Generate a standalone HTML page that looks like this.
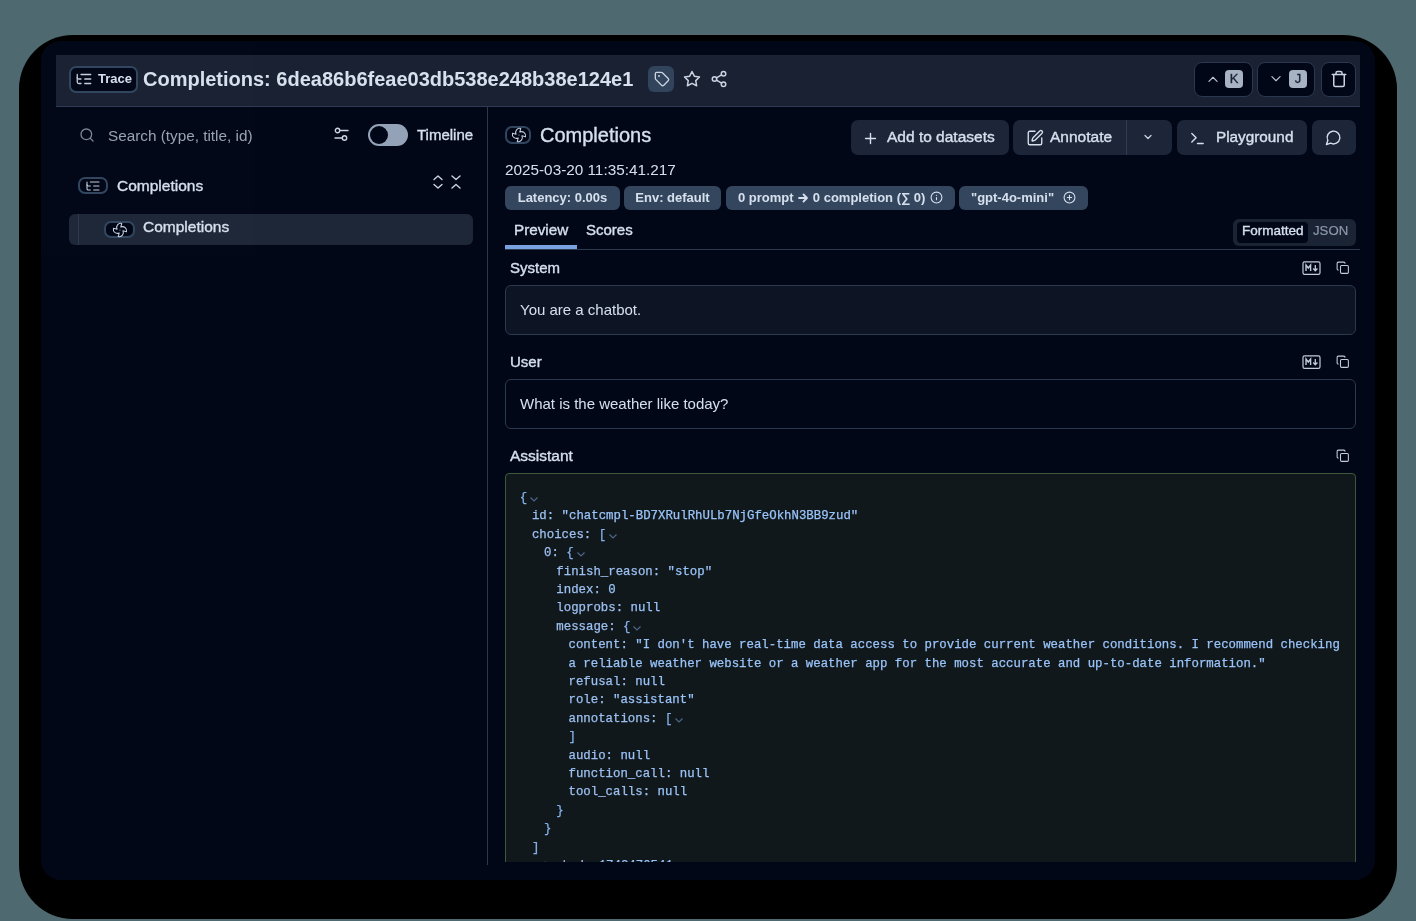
<!DOCTYPE html>
<html><head><meta charset="utf-8">
<style>
*{box-sizing:border-box;margin:0;padding:0}
html,body{width:1416px;height:921px;overflow:hidden;background:#4f6971;font-family:"Liberation Sans",sans-serif;color:#dde5f0}
.abs{position:absolute}
#frame{position:absolute;left:19px;top:35px;width:1378px;height:884px;background:#000;border-radius:54px}
#win{position:absolute;left:41px;top:41px;width:1334px;height:839px;background:#020817;border-radius:20px;overflow:hidden}
#hdr{position:absolute;left:56px;top:55px;width:1304px;height:52px;background:#1a2233;border-bottom:1px solid #2d3b54}
.btn{position:absolute;border:1px solid #2b3a52;border-radius:8px;background:#020817}
.kbd{position:absolute;width:18px;height:18px;border-radius:4px;background:#a8b3c3;color:#1a2436;font-size:13px;-webkit-text-stroke:0.3px currentColor;text-align:center;line-height:18px}
svg{position:absolute;overflow:visible}
.t{position:absolute;white-space:nowrap}
.med{-webkit-text-stroke:0.35px currentColor}
.cl{position:absolute;white-space:nowrap;font-family:"Liberation Mono",monospace;font-size:12.36px;line-height:18.4px;height:18.4px}
.k{color:#9dc1f2}.s{color:#9ac4fa}.p{color:#86b2ee}
.cl{-webkit-text-stroke:0.25px currentColor}
.chev{position:relative;left:3px;top:1px;display:inline-block}
.badge{border-radius:6px;background:#35475f;color:#d7e1ee;font-size:13px;font-weight:bold;text-align:center;line-height:24px;white-space:nowrap}
</style></head><body><div id="root" style="position:absolute;left:0;top:0;width:1416px;height:921px;will-change:transform;opacity:0.999">
<div id="frame"></div>
<div id="win"></div>
<div id="hdr"></div>
<!-- header content -->
<div class="abs" style="left:69px;top:66px;width:69px;height:27px;border:2px solid #33465f;border-radius:7px;background:#020817"></div>
<svg style="left:75px;top:70px" width="18" height="18" viewBox="0 0 24 24" fill="none" stroke="#c6d0de" stroke-width="1.7" stroke-linecap="round" stroke-linejoin="round"><path d="M21 12h-8"/><path d="M21 6H8"/><path d="M21 18h-8"/><path d="M3 6v4c0 1.1.9 2 2 2h3"/><path d="M3 10v6c0 1.1.9 2 2 2h3"/></svg>
<div class="t" style="left:98px;top:71px;font-size:13px;font-weight:bold;color:#d7e1ee">Trace</div>
<div class="t" style="left:143px;top:68px;font-size:20px;font-weight:bold;color:#d8e2ef">Completions: 6dea86b6feae03db538e248b38e124e1</div>
<div class="abs" style="left:648px;top:66px;width:26px;height:26px;border-radius:6px;background:#33445d"></div>
<svg style="left:654px;top:71px" width="16" height="16" viewBox="0 0 24 24" fill="none" stroke="#cbd5e1" stroke-width="2" stroke-linecap="round" stroke-linejoin="round"><path d="M12.586 2.586A2 2 0 0 0 11.172 2H4a2 2 0 0 0-2 2v7.172a2 2 0 0 0 .586 1.414l8.704 8.704a2.426 2.426 0 0 0 3.42 0l6.58-6.58a2.426 2.426 0 0 0 0-3.42z"/><circle cx="7.5" cy="7.5" r=".5" fill="#cbd5e1"/></svg>
<svg style="left:683px;top:70px" width="18" height="18" viewBox="0 0 24 24" fill="none" stroke="#cbd5e1" stroke-width="2" stroke-linecap="round" stroke-linejoin="round"><polygon points="12 2 15.09 8.26 22 9.27 17 14.14 18.18 21.02 12 17.77 5.82 21.02 7 14.14 2 9.27 8.91 8.26 12 2"/></svg>
<svg style="left:710px;top:70px" width="18" height="18" viewBox="0 0 24 24" fill="none" stroke="#cbd5e1" stroke-width="2" stroke-linecap="round" stroke-linejoin="round"><circle cx="18" cy="5" r="3"/><circle cx="6" cy="12" r="3"/><circle cx="18" cy="19" r="3"/><line x1="8.59" y1="13.51" x2="15.42" y2="17.49"/><line x1="15.41" y1="6.51" x2="8.59" y2="10.49"/></svg>

<div class="btn" style="left:1194px;top:62px;width:59px;height:35px"></div>
<svg style="left:1206px;top:72px" width="14" height="14" viewBox="0 0 24 24" fill="none" stroke="#b9c3d1" stroke-width="2" stroke-linecap="round" stroke-linejoin="round"><path d="m5 16 7-7 7 7"/></svg>
<div class="kbd" style="left:1225px;top:70px">K</div>
<div class="btn" style="left:1257px;top:62px;width:58px;height:35px"></div>
<svg style="left:1269px;top:72px" width="14" height="14" viewBox="0 0 24 24" fill="none" stroke="#b9c3d1" stroke-width="2" stroke-linecap="round" stroke-linejoin="round"><path d="m5 8 7 7 7-7"/></svg>
<div class="kbd" style="left:1289px;top:70px">J</div>
<div class="btn" style="left:1321px;top:62px;width:35px;height:35px"></div>
<svg style="left:1330px;top:70px" width="18" height="18" viewBox="0 0 24 24" fill="none" stroke="#cbd5e1" stroke-width="2" stroke-linecap="round" stroke-linejoin="round"><path d="M3 6h18"/><path d="M19 6v14c0 1-1 2-2 2H7c-1 0-2-1-2-2V6"/><path d="M8 6V4c0-1 1-2 2-2h4c1 0 2 1 2 2v2"/></svg>

<!-- left panel -->
<div class="abs" style="left:487px;top:107px;width:1px;height:758px;background:#2c3a50"></div>


<svg style="left:79px;top:127px" width="16" height="16" viewBox="0 0 24 24" fill="none" stroke="#7c8799" stroke-width="2" stroke-linecap="round" stroke-linejoin="round"><circle cx="11" cy="11" r="8"/><path d="m21 21-4.3-4.3"/></svg>
<div class="t" style="left:108px;top:127px;font-size:15.3px;color:#9aa4b4">Search (type, title, id)</div>
<svg style="left:334px;top:127px" width="15" height="15" viewBox="0 0 15 15" fill="none" stroke="#cbd5e1" stroke-width="1.4" stroke-linecap="round"><circle cx="3.5" cy="3.5" r="2.2"/><path d="M5.7 3.5H14"/><circle cx="10.5" cy="11" r="2.2"/><path d="M1 11h7.3"/></svg>
<div class="abs" style="left:368px;top:124px;width:40px;height:22px;border-radius:11px;background:#94a3b8"></div>
<div class="abs" style="left:370px;top:126px;width:18px;height:18px;border-radius:9px;background:#020817"></div>
<div class="t med" style="left:417px;top:126px;font-size:15px;color:#d7e1ee">Timeline</div>

<div class="abs" style="left:78px;top:177px;width:30px;height:17px;border:2px solid #33465f;border-radius:7px"></div>
<svg style="left:85px;top:178px" width="16" height="16" viewBox="0 0 24 24" fill="none" stroke="#c6d0de" stroke-width="1.6" stroke-linecap="round" stroke-linejoin="round"><path d="M21 12h-8"/><path d="M21 6H8"/><path d="M21 18h-8"/><path d="M3 6v4c0 1.1.9 2 2 2h3"/><path d="M3 10v6c0 1.1.9 2 2 2h3"/></svg>
<div class="t med" style="left:117px;top:177px;font-size:15.5px;color:#d7e1ee">Completions</div>
<svg style="left:432px;top:175px" width="12" height="14" viewBox="0 0 12 14" fill="none" stroke="#cbd5e1" stroke-width="1.4" stroke-linecap="round" stroke-linejoin="round"><path d="M2 4.5 6 1l4 3.5M2 9.5 6 13l4-3.5"/></svg>
<svg style="left:449.5px;top:175px" width="12" height="14" viewBox="0 0 12 14" fill="none" stroke="#cbd5e1" stroke-width="1.4" stroke-linecap="round" stroke-linejoin="round"><path d="M2 1 6 4.5 10 1M2 13 6 9.5 10 13"/></svg>

<div class="abs" style="left:69px;top:214px;width:404px;height:31px;border-radius:6px;background:#1e2839"></div>
<div class="abs" style="left:78px;top:214px;width:1px;height:31px;background:#2d3b52"></div>
<div class="abs" style="left:104px;top:221px;width:31px;height:17px;border:2px solid #33465f;border-radius:7px;background:#020817"></div>
<svg style="left:112px;top:222px" width="16" height="16" viewBox="0 0 24 24" fill="none" stroke="#c6d0de" stroke-width="1.6" stroke-linecap="round" stroke-linejoin="round"><path d="M10.827 16.379a6.082 6.082 0 0 1-8.618-7.002l5.412 1.45a6.082 6.082 0 0 1 7.002-8.618l-1.45 5.412a6.082 6.082 0 0 1 8.618 7.002l-5.412-1.45a6.082 6.082 0 0 1-7.002 8.618l1.45-5.412Z"/><path d="M12 12v.01"/></svg>
<div class="t med" style="left:143px;top:218px;font-size:15.5px;color:#d7e1ee">Completions</div>

<!-- right panel header -->
<div class="abs" style="left:505px;top:126px;width:26px;height:18px;border:2px solid #33465f;border-radius:7px"></div>
<svg style="left:511px;top:127px" width="16" height="16" viewBox="0 0 24 24" fill="none" stroke="#c6d0de" stroke-width="1.6" stroke-linecap="round" stroke-linejoin="round"><path d="M10.827 16.379a6.082 6.082 0 0 1-8.618-7.002l5.412 1.45a6.082 6.082 0 0 1 7.002-8.618l-1.45 5.412a6.082 6.082 0 0 1 8.618 7.002l-5.412-1.45a6.082 6.082 0 0 1-7.002 8.618l1.45-5.412Z"/><path d="M12 12v.01"/></svg>
<div class="t med" style="left:540px;top:124px;font-size:20px;color:#d7e1ee">Completions</div>

<div class="abs" style="left:851px;top:120px;width:158px;height:35px;border-radius:7px;background:#1d2739"></div>
<svg style="left:862px;top:130px" width="17" height="17" viewBox="0 0 24 24" fill="none" stroke="#d7e1ee" stroke-width="2" stroke-linecap="round"><path d="M5 12h14M12 5v14"/></svg>
<div class="t med" style="left:887px;top:128px;font-size:15.5px;color:#d7e1ee">Add to datasets</div>

<div class="abs" style="left:1013px;top:120px;width:159px;height:35px;border-radius:7px;background:#1d2739"></div>
<div class="abs" style="left:1126px;top:120px;width:1px;height:35px;background:#2f3d55"></div>
<svg style="left:1026px;top:129px" width="18" height="18" viewBox="0 0 24 24" fill="none" stroke="#d7e1ee" stroke-width="1.8" stroke-linecap="round" stroke-linejoin="round"><path d="M12 3H5a2 2 0 0 0-2 2v14a2 2 0 0 0 2 2h14a2 2 0 0 0 2-2v-7"/><path d="M18.375 2.625a1 1 0 0 1 3 3l-9.013 9.014a2 2 0 0 1-.853.505l-2.873.84a.5.5 0 0 1-.62-.62l.84-2.873a2 2 0 0 1 .506-.852z"/></svg>
<div class="t med" style="left:1050px;top:128px;font-size:15.5px;color:#d7e1ee">Annotate</div>
<svg style="left:1142px;top:131px" width="12" height="12" viewBox="0 0 24 24" fill="none" stroke="#cbd5e1" stroke-width="2.5" stroke-linecap="round" stroke-linejoin="round"><path d="m6 9 6 6 6-6"/></svg>

<div class="abs" style="left:1177px;top:120px;width:130px;height:35px;border-radius:7px;background:#1d2739"></div>
<svg style="left:1189px;top:130px" width="17" height="17" viewBox="0 0 24 24" fill="none" stroke="#d7e1ee" stroke-width="2" stroke-linecap="round" stroke-linejoin="round"><path d="m4 17 6-6-6-6"/><path d="M12 19h8"/></svg>
<div class="t med" style="left:1216px;top:128px;font-size:15.3px;color:#d7e1ee">Playground</div>

<div class="abs" style="left:1312px;top:120px;width:44px;height:35px;border-radius:7px;background:#1d2739"></div>
<svg style="left:1325px;top:129px" width="17" height="17" viewBox="0 0 24 24" fill="none" stroke="#d7e1ee" stroke-width="2" stroke-linecap="round" stroke-linejoin="round"><path d="M7.9 20A9 9 0 1 0 4 16.1L2 22Z"/></svg>

<div class="t" style="left:505px;top:161px;font-size:15.3px;color:#d7e1ee">2025-03-20 11:35:41.217</div>

<div class="abs badge" style="left:505px;top:186px;width:115px;height:24px">Latency: 0.00s</div>
<div class="abs badge" style="left:624px;top:186px;width:97px;height:24px">Env: default</div>
<div class="abs badge" style="left:726px;top:186px;width:229px;height:24px;text-align:left;padding-left:12px">0 prompt <svg style="position:relative;display:inline-block;top:1px;margin:0 1px" width="10" height="10" viewBox="0 0 10 10" fill="none" stroke="#d7e1ee" stroke-width="1.8" stroke-linecap="round" stroke-linejoin="round"><path d="M1 5h8M5.5 1.5 9 5 5.5 8.5"/></svg> 0 completion (&sum; 0)</div>
<svg style="left:930px;top:191px" width="13" height="13" viewBox="0 0 24 24" fill="none" stroke="#d7e1ee" stroke-width="2" stroke-linecap="round"><circle cx="12" cy="12" r="10"/><path d="M12 16v-4M12 8h.01"/></svg>
<div class="abs badge" style="left:959px;top:186px;width:129px;height:24px;text-align:left;padding-left:12px">"gpt-4o-mini"</div>
<svg style="left:1063px;top:191px" width="13" height="13" viewBox="0 0 24 24" fill="none" stroke="#d7e1ee" stroke-width="2" stroke-linecap="round"><circle cx="12" cy="12" r="10"/><path d="M8 12h8M12 8v8"/></svg>

<div class="t med" style="left:514px;top:221px;font-size:15.25px;color:#d7e1ee">Preview</div>
<div class="t med" style="left:586px;top:221px;font-size:15px;color:#d7e1ee">Scores</div>
<div class="abs" style="left:505px;top:249px;width:855px;height:1px;background:#2c3a50"></div>
<div class="abs" style="left:505px;top:245px;width:72px;height:4px;background:#7aa2e3"></div>

<div class="abs" style="left:1233px;top:219px;width:123px;height:27px;border-radius:6px;background:#1c2536"></div>
<div class="abs" style="left:1237px;top:222px;width:71px;height:21px;border-radius:4px;background:#020817"></div>
<div class="t med" style="left:1242px;top:223px;font-size:13.5px;color:#d7e1ee">Formatted</div>
<div class="t" style="left:1313px;top:223px;font-size:13.2px;color:#8d9aad;-webkit-text-stroke:0.2px currentColor">JSON</div>

<!-- messages -->
<div class="t med" style="left:510px;top:259px;font-size:15px;color:#d7e1ee">System</div>
<svg style="left:1302px;top:261px" width="19" height="14" viewBox="0 0 19 14" fill="none" stroke="#c3cddb" stroke-width="1.2"><rect x="1" y="0.8" width="17" height="12.6" rx="1.6"/><path d="M4 10V4l2.3 3 2.3-3v6" stroke-width="1.4"/><path d="M13.3 4v5.6M11.2 7.5l2.1 2.2 2.1-2.2" stroke-width="1.3"/></svg><svg style="left:1336px;top:261px" width="13.5" height="13.5" viewBox="0 0 24 24" fill="none" stroke="#c3cddb" stroke-width="1.9" stroke-linecap="round" stroke-linejoin="round"><rect width="14" height="14" x="8" y="8" rx="2" ry="2"/><path d="M4 16c-1.1 0-2-.9-2-2V4c0-1.1.9-2 2-2h10c1.1 0 2 .9 2 2"/></svg>
<div class="abs" style="left:505px;top:285px;width:851px;height:50px;border:1px solid #2c3a50;border-radius:6px;background:#0e1626"></div>
<div class="t" style="left:520px;top:301px;font-size:15px;color:#d7e1ee">You are a chatbot.</div>

<div class="t med" style="left:510px;top:353px;font-size:15px;color:#d7e1ee">User</div>
<svg style="left:1302px;top:355px" width="19" height="14" viewBox="0 0 19 14" fill="none" stroke="#c3cddb" stroke-width="1.2"><rect x="1" y="0.8" width="17" height="12.6" rx="1.6"/><path d="M4 10V4l2.3 3 2.3-3v6" stroke-width="1.4"/><path d="M13.3 4v5.6M11.2 7.5l2.1 2.2 2.1-2.2" stroke-width="1.3"/></svg><svg style="left:1336px;top:355px" width="13.5" height="13.5" viewBox="0 0 24 24" fill="none" stroke="#c3cddb" stroke-width="1.9" stroke-linecap="round" stroke-linejoin="round"><rect width="14" height="14" x="8" y="8" rx="2" ry="2"/><path d="M4 16c-1.1 0-2-.9-2-2V4c0-1.1.9-2 2-2h10c1.1 0 2 .9 2 2"/></svg>
<div class="abs" style="left:505px;top:379px;width:851px;height:50px;border:1px solid #2c3a50;border-radius:6px;background:#020817"></div>
<div class="t" style="left:520px;top:395px;font-size:15px;color:#d7e1ee">What is the weather like today?</div>

<div class="t med" style="left:510px;top:447px;font-size:15.5px;color:#d7e1ee">Assistant</div>
<svg style="left:1336px;top:449px" width="13.5" height="13.5" viewBox="0 0 24 24" fill="none" stroke="#c3cddb" stroke-width="1.9" stroke-linecap="round" stroke-linejoin="round"><rect width="14" height="14" x="8" y="8" rx="2" ry="2"/><path d="M4 16c-1.1 0-2-.9-2-2V4c0-1.1.9-2 2-2h10c1.1 0 2 .9 2 2"/></svg>
<div class="abs" style="left:500px;top:470px;width:870px;height:392px;overflow:hidden"><div class="abs" style="left:5px;top:3px;width:851px;height:420px;border:1px solid #3b5a3e;border-radius:4px;background:#12191c"></div></div>
<div class="abs" style="left:506px;top:474px;width:849px;height:388px;overflow:hidden">
<div class="cl" style="left:13.7px;top:15.0px"><span class="p">{</span><svg class="chev" width="8" height="5" viewBox="0 0 8 5" fill="none" stroke="#4d6a8f" stroke-width="1.1"><path d="M0.5 0.5 4 4 7.5 0.5"/></svg></div>
<div class="cl" style="left:25.9px;top:33.4px"><span class="k">id:</span> <span class="s">"chatcmpl-BD7XRulRhULb7NjGfeOkhN3BB9zud"</span></div>
<div class="cl" style="left:25.9px;top:51.8px"><span class="k">choices:</span> <span class="p">[</span><svg class="chev" width="8" height="5" viewBox="0 0 8 5" fill="none" stroke="#4d6a8f" stroke-width="1.1"><path d="M0.5 0.5 4 4 7.5 0.5"/></svg></div>
<div class="cl" style="left:38.1px;top:70.2px"><span class="k">0:</span> <span class="p">{</span><svg class="chev" width="8" height="5" viewBox="0 0 8 5" fill="none" stroke="#4d6a8f" stroke-width="1.1"><path d="M0.5 0.5 4 4 7.5 0.5"/></svg></div>
<div class="cl" style="left:50.3px;top:88.6px"><span class="k">finish_reason:</span> <span class="s">"stop"</span></div>
<div class="cl" style="left:50.3px;top:107.0px"><span class="k">index:</span> <span class="s">0</span></div>
<div class="cl" style="left:50.3px;top:125.4px"><span class="k">logprobs:</span> <span class="s">null</span></div>
<div class="cl" style="left:50.3px;top:143.8px"><span class="k">message:</span> <span class="p">{</span><svg class="chev" width="8" height="5" viewBox="0 0 8 5" fill="none" stroke="#4d6a8f" stroke-width="1.1"><path d="M0.5 0.5 4 4 7.5 0.5"/></svg></div>
<div class="cl" style="left:62.5px;top:162.2px"><span class="k">content:</span> <span class="s">"I don't have real-time data access to provide current weather conditions. I recommend checking</span></div>
<div class="cl" style="left:62.5px;top:180.6px"><span class="s">a reliable weather website or a weather app for the most accurate and up-to-date information."</span></div>
<div class="cl" style="left:62.5px;top:199.0px"><span class="k">refusal:</span> <span class="s">null</span></div>
<div class="cl" style="left:62.5px;top:217.4px"><span class="k">role:</span> <span class="s">"assistant"</span></div>
<div class="cl" style="left:62.5px;top:235.8px"><span class="k">annotations:</span> <span class="p">[</span><svg class="chev" width="8" height="5" viewBox="0 0 8 5" fill="none" stroke="#4d6a8f" stroke-width="1.1"><path d="M0.5 0.5 4 4 7.5 0.5"/></svg></div>
<div class="cl" style="left:62.5px;top:254.2px"><span class="p">]</span></div>
<div class="cl" style="left:62.5px;top:272.6px"><span class="k">audio:</span> <span class="s">null</span></div>
<div class="cl" style="left:62.5px;top:291.0px"><span class="k">function_call:</span> <span class="s">null</span></div>
<div class="cl" style="left:62.5px;top:309.4px"><span class="k">tool_calls:</span> <span class="s">null</span></div>
<div class="cl" style="left:50.3px;top:327.8px"><span class="p">}</span></div>
<div class="cl" style="left:38.1px;top:346.2px"><span class="p">}</span></div>
<div class="cl" style="left:25.9px;top:364.6px"><span class="p">]</span></div>
<div class="cl" style="left:25.9px;top:383.0px"><span class="k">created:</span> <span class="s">1742470541</span></div>
</div>
</div></body></html>
